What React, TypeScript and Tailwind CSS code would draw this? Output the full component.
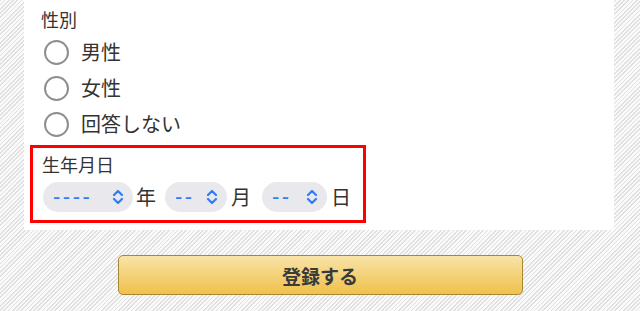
import React from "react";

const Chevron = () => (
  <svg width="12" height="16" viewBox="0 0 12 16" fill="none" stroke="#2f7cf6" strokeWidth="2.2" strokeLinecap="round" strokeLinejoin="round">
    <path d="M2 6 L6 2 L10 6" />
    <path d="M2 10 L6 14 L10 10" />
  </svg>
);

const Select = ({ text, w }: { text: string; w: string }) => (
  <div className={`${w} h-[30px] rounded-full bg-[#e9e9ed] flex items-center justify-between pl-[10px] pr-[9px]`}>
    <span className="text-[#2f7cf6] text-[22px] leading-none tracking-[2.5px] font-['Liberation_Sans',sans-serif]">{text}</span>
    <Chevron />
  </div>
);

const Radio = ({ label }: { label: string }) => (
  <div className="h-[36px] flex items-center">
    <div className="ml-[3px] w-[25px] h-[25px] rounded-full border-2 border-[#8e8e8e] bg-white" />
    <span className="ml-[12px] text-[20px] leading-none">{label}</span>
  </div>
);

export default function App() {
  return (
    <div
      className="w-[640px] h-[311px] overflow-hidden bg-[repeating-linear-gradient(135deg,#e0e0e0_0px,#e0e0e0_1.2px,#fafafa_1.2px,#fafafa_3px)] text-[#333] font-['Noto_Sans_CJK_JP',sans-serif]"
    >
      <div className="ml-[24px] w-[590px] h-[230px] bg-white pl-[6px] pt-[7px]">
        <div className="pl-[11px]">
          <div className="text-[18px] leading-[24px]">性別</div>
          <div className="mt-[3px]">
            <Radio label="男性" />
            <Radio label="女性" />
            <Radio label="回答しない" />
          </div>
        </div>
        <div className="mt-[3px] w-[336px] border-[3px] border-[#ff0000] pl-[9px] pt-[4px] pb-[8px]">
          <div className="text-[18px] leading-[24px]">生年月日</div>
          <div className="mt-[6px] flex items-center">
            <div className="ml-[1px]"><Select text="----" w="w-[90px]" /></div>
            <span className="ml-[3px] text-[20px] leading-none">年</span>
            <div className="ml-[9px]"><Select text="--" w="w-[62px]" /></div>
            <span className="ml-[4px] text-[20px] leading-none">月</span>
            <div className="ml-[11px]"><Select text="--" w="w-[65px]" /></div>
            <span className="ml-[4px] text-[20px] leading-none">日</span>
          </div>
        </div>
      </div>
      <div className="mt-[25px] flex justify-center">
        <button className="w-[405px] h-[40px] rounded-[5px] border border-[#a88734] bg-[linear-gradient(to_bottom,#f8e3a8,#f0c14b)] text-[19px] font-bold text-[#3a3a3a] leading-none flex items-center justify-center">
          登録する
        </button>
      </div>
    </div>
  );
}
